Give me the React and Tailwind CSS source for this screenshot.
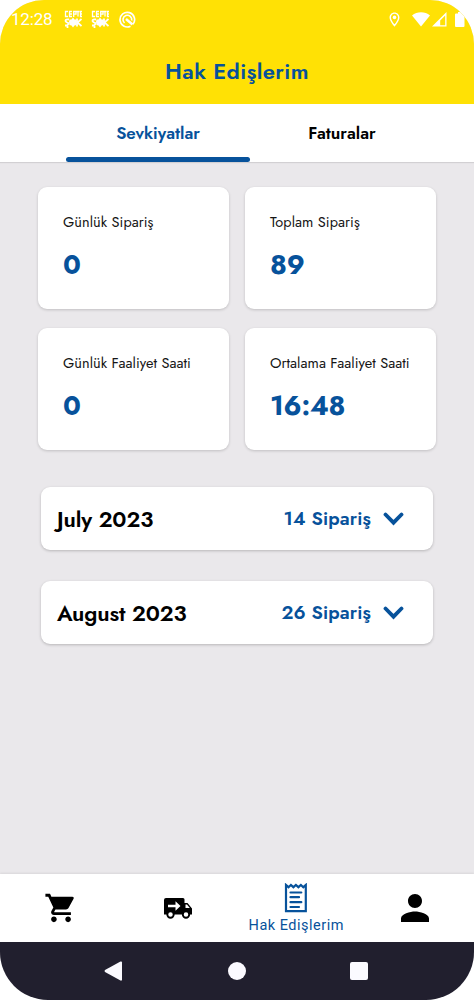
import React, { useState } from 'react';
import { MdShoppingCart, MdPerson, MdOutlineLocationOn } from 'react-icons/md';

const stats = [
  { label: 'Günlük Sipariş', value: '0' },
  { label: 'Toplam Sipariş', value: '89' },
  { label: 'Günlük Faaliyet Saati', value: '0' },
  { label: 'Ortalama Faaliyet Saati', value: '16:48' }
];

const months = [
  { name: 'July 2023', count: '14 Sipariş' },
  { name: 'August 2023', count: '26 Sipariş' }
];

function BrandIcon() {
  return (
    <svg width="18" height="19" viewBox="0 0 18 19" fill="none" stroke="currentColor">
      <path d="M4 1.500H1.500V6.500H4M8 1.500H5.500V6.500H8M5.500 4H8M9.700 7V1.500H12V4.200H10M12.500 1.500H15.500M14 1.500V6.500M18 1.500H16.500V6.500H18M16.500 4H18" strokeWidth="1.300" />
      <path d="M5 9.500Q1.500 9 1.500 11Q2 12.500 4 12.800Q5 15.500 1 15.500M3.500 16V18M13 8.500V16.500M17.500 9L13.500 12.500L17.500 16" strokeWidth="1.800" />
      <path d="M9 7.500L10.500 9.500L12.500 9.500L12.800 12L12.500 15L10.500 15.500L9 17.500L7.500 15.500L5.500 15L5 12L5.500 9.500L7.500 9.500z" fill="currentColor" stroke="none" />
    </svg>
  );
}

function StatusBar() {
  return (
    <div className="h-[38px] pl-[11px] flex items-center justify-between text-white">
      <div className="flex items-center">
        <span className="w-[43px] font-['Roboto',sans-serif] text-[17px] leading-none tracking-[-0.2px] whitespace-nowrap">12:28</span>
        <div className="ml-[10px] flex gap-[9px]">
          <BrandIcon />
          <BrandIcon />
        </div>
        <svg className="ml-[10px]" width="17" height="17" viewBox="0 0 17 17" fill="none" stroke="currentColor">
          <path d="M14 13.200A7.300 7.300 0 1 0 11.500 15.200" strokeWidth="1.700" />
          <path d="M5.500 12A4.400 4.400 0 1 1 12.700 9.500" strokeWidth="1.600" />
          <path d="M7 8L13.500 13.500" strokeWidth="2.400" />
        </svg>
      </div>
      <div className="flex items-center">
        <MdOutlineLocationOn className="w-[17px] h-[17px] mr-[9px]" />
        <svg width="18" height="15" viewBox="0 0 18 15" className="mr-[2px]" fill="currentColor">
          <path d="M0 3.400C5 -.9 13 -.9 18 3.400L9 14.500z" />
        </svg>
        <svg width="15" height="15" viewBox="0 0 15 15" className="mr-[8px]" fill="currentColor">
          <path fillRule="evenodd" d="M14.500 0V14.500H0zM13.200 3.400L8.200 8.400V13.200H13.200z" />
        </svg>
        <svg width="10" height="15" viewBox="0 0 10 15" className="mr-[9px]" fill="currentColor">
          <path d="M3 0H7V1.500H8.500a1 1 0 0 1 1 1V14a1 1 0 0 1-1 1H1a1 1 0 0 1-1-1V2.500a1 1 0 0 1 1-1H3z" />
        </svg>
      </div>
    </div>
  );
}

function TruckIcon() {
  return (
    <svg width="30" height="22" viewBox="0 0 30 22">
      <path d="M3 1H20Q21.500 1 21.500 2.500V6H24.500L29 11.500V17.500H1V3Q1 1 3 1z" fill="#000" />
      <path d="M22.500 7.500H24L26.800 11H22.500z" fill="#fff" />
      <path d="M5 7.800H12.500V4.300L17.500 9L12.500 13.700V10.200H5z" fill="#fff" />
      <circle cx="7.500" cy="17.500" r="3.200" fill="#fff" stroke="#000" strokeWidth="1.900" />
      <circle cx="23" cy="17.500" r="3.200" fill="#fff" stroke="#000" strokeWidth="1.900" />
    </svg>
  );
}

function ReceiptIcon() {
  return (
    <svg width="24" height="30" viewBox="0 0 24 30" fill="none" stroke="currentColor">
      <path d="M2 2V28.200H21.800V2L19.300 4.200L16.900 2L14.400 4.200L11.900 2L9.400 4.200L6.900 2L4.500 4.200z" strokeWidth="2.200" />
      <path d="M6.500 9.500H17.300M6.500 14.200H15M6.500 19.200H17.300M6.500 24H15" strokeWidth="2.200" strokeLinecap="round" />
    </svg>
  );
}

export default function App() {
  const [tab, setTab] = useState('Sevkiyatlar');

  return (
    <div className="w-[474px] h-[1000px] bg-white overflow-hidden font-['Jost','Lato',sans-serif]">
      <div className="h-full flex flex-col bg-[#eae8eb] rounded-t-[44px] rounded-b-[48px] overflow-hidden">
        <header className="h-[104px] shrink-0 bg-[#ffe105]">
          <StatusBar />
          <h1 className="h-[66px] pt-[18px] text-center text-[22px] leading-[30px] font-semibold tracking-[0.4px] text-[#07529b]">
            Hak Edişlerim
          </h1>
        </header>

        {/* Tabs */}
        <div className="h-[58px] shrink-0 bg-white px-[66px] flex shadow-[0_1px_1px_rgba(0,0,0,0.10)]">
          {['Sevkiyatlar', 'Faturalar'].map((t) => (
            <button
              key={t}
              onClick={() => setTab(t)}
              className={`w-[184px] shrink-0 flex flex-col justify-between items-center text-[17px] font-semibold ${tab === t ? 'text-[#07529b]' : 'text-black'}`}
            >
              <span className="pt-[17px] leading-[24px]">{t}</span>
              <span className={`w-full h-[5px] rounded-full ${tab === t ? 'bg-[#07529b]' : ''}`}></span>
            </button>
          ))}
        </div>

        <main className="flex-1 pt-[25px]">
          <div className="grid grid-cols-[191px_191px] gap-x-4 gap-y-[19px] pl-[38px]">
            {stats.map((s) => (
              <div key={s.label} className="h-[122px] bg-white rounded-[9px] pl-[25px] pt-[24px] shadow-[0_1px_3px_rgba(0,0,0,0.18)]">
                <p className="text-[14.5px] leading-[22px] tracking-[0.06px] text-[#151515] whitespace-nowrap">{s.label}</p>
                <p className="mt-[15px] text-[27px] leading-[34px] font-bold tracking-[-0.2px] text-[#07529b]">{s.value}</p>
              </div>
            ))}
          </div>

          <div className="mt-[37px] mx-[41px] flex flex-col gap-[31px]">
            {months.map((m) => (
              <div key={m.name} className="h-[63px] bg-white rounded-[9px] pl-4 pr-[29px] flex items-center shadow-[0_1px_3px_rgba(0,0,0,0.22)]">
                <span className="flex-1 pt-px text-[22px] font-semibold tracking-[-0.1px] text-black">{m.name}</span>
                <span className="pt-[2px] text-[19px] font-semibold tracking-[0.1px] text-[#07529b]">{m.count}</span>
                <svg className="ml-3" width="21" height="14" viewBox="0 0 21 14" fill="none" stroke="#07529b" strokeWidth="3.800" strokeLinecap="round">
                  <path d="M2.500 2.500L10.500 10.700L18.500 2.500" />
                </svg>
              </div>
            ))}
          </div>
        </main>

        {/* Bottom navigation */}
        <nav className="h-[68px] shrink-0 bg-white grid grid-cols-4 shadow-[0_-1px_2px_rgba(0,0,0,0.08)]">
          <div className="pl-[3px] flex items-center justify-center">
            <MdShoppingCart className="w-[34px] h-[34px]" />
          </div>
          <div className="flex items-center justify-center">
            <TruckIcon />
          </div>
          <div className="pt-[9px] flex flex-col items-center text-[#07529b]">
            <ReceiptIcon />
            <span className="mt-[3px] font-['Roboto',sans-serif] text-[14.5px] leading-[20px] tracking-[0.5px] whitespace-nowrap">Hak Edişlerim</span>
          </div>
          <div className="flex items-center justify-center">
            <MdPerson className="w-[42px] h-[42px]" />
          </div>
        </nav>

        <div className="h-[58px] shrink-0 bg-[#211f2e] flex items-center text-[#fbfaff]">
          <svg className="ml-[104px]" width="19" height="20" viewBox="0 0 19 20" fill="currentColor">
            <path d="M1 9L16.500 .5Q18 0 18 1.500V18.500Q18 20 16.500 19.500L1 11Q0 10 1 9z" />
          </svg>
          <div className="ml-[105px] w-[18px] h-[18px] rounded-full bg-[#fbfaff]"></div>
          <div className="ml-[104px] w-[18px] h-[18px] rounded-[2px] bg-[#fbfaff]"></div>
        </div>
      </div>
    </div>
  );
}
